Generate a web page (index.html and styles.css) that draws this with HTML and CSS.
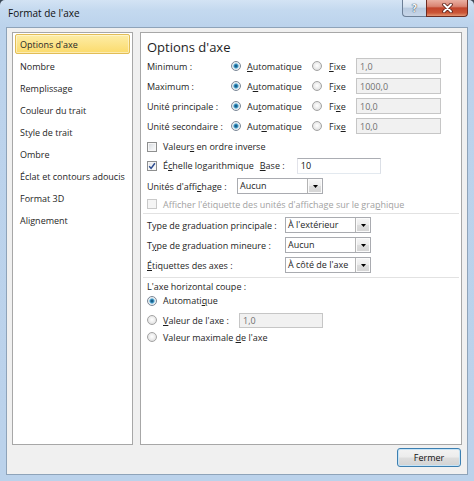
FILE: index.html
```html
<!DOCTYPE html>
<html lang="fr">
<head>
<meta charset="utf-8">
<title>Format de l'axe</title>
<link rel="stylesheet" href="styles.css">
</head>
<body>
<div class="window">
  <div class="titlebar">
    <span class="title">Format de l'axe</span>
    <div class="caption-btns">
      <span class="cbtn help">?</span>
      <span class="cbtn close"><svg width="13" height="10" viewBox="0 0 13 10"><path d="M3 1.5 L10 8.5 M10 1.5 L3 8.5" stroke="#5a2118" stroke-width="3.6" stroke-linecap="round"/><path d="M3 1.5 L10 8.5 M10 1.5 L3 8.5" stroke="#ffffff" stroke-width="1.9" stroke-linecap="round"/></svg></span>
    </div>
  </div>
  <div class="client">
    <div class="panels">
      <ul class="nav">
        <li class="nav-item selected">Options d'axe</li>
        <li class="nav-item">Nombre</li>
        <li class="nav-item">Remplissage</li>
        <li class="nav-item">Couleur du trait</li>
        <li class="nav-item">Style de trait</li>
        <li class="nav-item">Ombre</li>
        <li class="nav-item">Éclat et contours adoucis</li>
        <li class="nav-item">Format 3D</li>
        <li class="nav-item">Alignement</li>
      </ul>
      <div class="content">
        <h1 class="heading">Options d'axe</h1>
        <div class="axis-grid">
          <span class="lbl">Minimum :</span>
          <span class="radio on"></span>
          <span class="opt"><u>A</u>utomatique</span>
          <span class="radio"></span>
          <span class="opt fixe"><u>F</u>ixe</span>
          <span class="tbox disabled">1,0</span>

          <span class="lbl">Maximum :</span>
          <span class="radio on"></span>
          <span class="opt">A<u>u</u>tomatique</span>
          <span class="radio"></span>
          <span class="opt fixe">F<u>i</u>xe</span>
          <span class="tbox disabled">1000,0</span>

          <span class="lbl">Unité principale :</span>
          <span class="radio on"></span>
          <span class="opt">Au<u>t</u>omatique</span>
          <span class="radio"></span>
          <span class="opt fixe">Fi<u>x</u>e</span>
          <span class="tbox disabled">10,0</span>

          <span class="lbl">Unité secondaire :</span>
          <span class="radio on"></span>
          <span class="opt">Aut<u>o</u>matique</span>
          <span class="radio"></span>
          <span class="opt fixe">Fix<u>e</u></span>
          <span class="tbox disabled">10,0</span>
        </div>

        <div class="row chk-row first">
          <span class="check"></span>
          <span class="txt">Valeur<u>s</u> en ordre inverse</span>
        </div>
        <div class="row chk-row">
          <span class="check on"><svg width="8" height="8" viewBox="0 0 8 8"><path d="M1.2 4.2 L3.1 6.4 L6.9 1.2" fill="none" stroke="#2d4c8f" stroke-width="1.5"/></svg></span>
          <span class="txt log-txt">É<u>c</u>helle logarithmique</span>
          <span class="base-lbl"><u>B</u>ase :</span>
          <span class="tbox base">10</span>
        </div>
        <div class="row units-row">
          <span class="units-lbl">Unités d'affi<u>c</u>hage :</span>
          <span class="combo"><span class="combo-val">Aucun</span><span class="combo-btn"><svg width="5" height="3" viewBox="0 0 5 3"><polygon points="0,0 5,0 2.5,3" fill="#000"/></svg></span></span>
        </div>
        <div class="row disp-row">
          <span class="check dis"></span>
          <span class="txt dim">Afficher l'étiquette des unités d'affichage sur le gra<u>p</u>hique</span>
        </div>

        <div class="sep"></div>

        <div class="tick-grid">
          <span class="lbl">Type de graduation principale :</span>
          <span class="combo"><span class="combo-val">À l'extérieur</span><span class="combo-btn"><svg width="5" height="3" viewBox="0 0 5 3"><polygon points="0,0 5,0 2.5,3" fill="#000"/></svg></span></span>
          <span class="lbl">T<u>y</u>pe de graduation mineure :</span>
          <span class="combo"><span class="combo-val">Aucun</span><span class="combo-btn"><svg width="5" height="3" viewBox="0 0 5 3"><polygon points="0,0 5,0 2.5,3" fill="#000"/></svg></span></span>
          <span class="lbl"><u>É</u>tiquettes des axes :</span>
          <span class="combo"><span class="combo-val">À côté de l'axe</span><span class="combo-btn"><svg width="5" height="3" viewBox="0 0 5 3"><polygon points="0,0 5,0 2.5,3" fill="#000"/></svg></span></span>
        </div>

        <div class="sep second"></div>

        <div class="cross-lbl">L'axe horizontal coupe :</div>
        <div class="row radio-row auto-row">
          <span class="radio on"></span>
          <span class="txt">Automati<u>q</u>ue</span>
        </div>
        <div class="row radio-row val-row">
          <span class="radio"></span>
          <span class="txt val-lbl"><u>V</u>aleur de l'axe :</span>
          <span class="tbox disabled small">1,0</span>
        </div>
        <div class="row radio-row max-row">
          <span class="radio"></span>
          <span class="txt">Valeur maximale <u>d</u>e l'axe</span>
        </div>
      </div>
    </div>
    <div class="btn-row">
      <button class="btn default">Fermer</button>
    </div>
  </div>
</div>
</body>
</html>
```

FILE: styles.css
```css
* { box-sizing: border-box; margin: 0; padding: 0; }

html, body {
  width: 474px;
  height: 481px;
  overflow: hidden;
  background: #3b4856;
}

body {
  font-family: "Open Sans", "Noto Sans", "DejaVu Sans", sans-serif;
  font-size: 9px;
  color: #1e1e1e;
}

u { text-decoration: underline; text-underline-offset: 1px; }

.window {
  height: 481px;
  display: flex;
  flex-direction: column;
  border-radius: 5px 5px 0 0;
  background: linear-gradient(180deg, #d3e3f4 0, #c4d9ef 10px, #bcd3ec 26px, #bbd2eb 100%);
}

/* Title bar */
.titlebar {
  height: 27px;
  display: flex;
  align-items: flex-start;
  padding-left: 8px;
}

.title {
  font-size: 10px;
  line-height: 27px;
  color: #111;
}

.caption-btns {
  margin-left: auto;
  margin-right: 6px;
  display: flex;
  height: 17px;
}

.cbtn {
  height: 17px;
  display: flex;
  align-items: center;
  justify-content: center;
}

.help {
  width: 24px;
  border: 1px solid #6c7f96;
  border-top: none;
  border-right: none;
  border-radius: 0 0 0 4px;
  background: linear-gradient(180deg, #e8eff8 0, #d3e0ee 45%, #b8cadf 50%, #c7d6e8 100%);
  color: #fff;
  font-weight: bold;
  font-size: 10px;
  text-shadow: 0 0 1px #2d3a48, 0 0 1px #2d3a48;
}

.close {
  width: 42px;
  border: 1px solid #6e2b20;
  border-top: none;
  border-radius: 0 0 4px 0;
  background: linear-gradient(180deg, #eab0a2 0, #d98472 40%, #c2452c 50%, #cb5536 80%, #e29572 100%);
}

/* Client area */
.client {
  flex: 1;
  margin: 0 6px 6px 6px;
  background: #f0f0f0;
  border: 1px solid #8ea3b9;
  display: flex;
  flex-direction: column;
  padding: 4px 5px 7px 5px;
}

.panels {
  flex: 1;
  display: flex;
  gap: 7px;
}

/* Left navigation */
.nav {
  width: 121px;
  list-style: none;
  background: #fff;
  border: 1px solid #a7a7a7;
  padding: 0;
}

.nav-item {
  height: 22px;
  margin: 0 2px;
  padding-left: 4px;
  border: 1px solid transparent;
  display: flex;
  align-items: center;
  color: #262626;
  white-space: nowrap;
}

.nav-item.selected {
  height: 20px;
  margin: 1px 2px;
  border: 1px solid #e2bd55;
  border-radius: 2px;
  background: linear-gradient(180deg, #fdeda6 0, #fce48a 50%, #fbdb6c 100%);
  box-shadow: inset 0 0 0 1px rgba(255, 255, 255, 0.45);
}

/* Right content */
.content {
  width: 322px;
  background: #fff;
  border: 1px solid #a7a7a7;
  padding: 6px 6px 0 6px;
  display: flex;
  flex-direction: column;
}

.heading {
  font-size: 13px;
  font-weight: normal;
  line-height: 17px;
  height: 17px;
  color: #1e1e1e;
}

.axis-grid {
  display: grid;
  grid-template-columns: 84px 10px 71px 10px 34px 85px;
  grid-auto-rows: 20px;
  align-items: center;
}

.lbl { white-space: nowrap; }

.opt { padding-left: 6px; white-space: nowrap; }
.opt.fixe { padding-left: 7px; }

/* Radio buttons */
.radio {
  width: 10px;
  height: 10px;
  flex: none;
  border-radius: 50%;
  border: 1px solid #a3a3a3;
  background: radial-gradient(circle at 50% 45%, #ffffff 0, #eeeeee 45%, #d4d4d4 100%);
}

.radio.on {
  border-color: #7b8796;
  background: radial-gradient(circle at 50% 50%, #0d4a70 0, #1f6f9f 22%, #64b6dc 40%, #d8e6ef 52%, #f4f4f4 70%, #dcdcdc 100%);
}

/* Checkboxes */
.check {
  width: 10px;
  height: 10px;
  flex: none;
  border: 1px solid #8e8f8f;
  background: linear-gradient(135deg, #d3d6da 0, #eef0f2 60%, #fbfbfb 100%);
  box-shadow: inset 0 0 0 1px #f6f6f6;
  display: flex;
  align-items: center;
  justify-content: center;
}

.check.on { background: linear-gradient(135deg, #dfe2e6 0, #f4f5f6 60%, #fdfdfd 100%); }

.check.dis {
  border-color: #c9c9c9;
  background: #f5f5f5;
  box-shadow: none;
}

/* Text boxes */
.tbox {
  height: 16px;
  width: 85px;
  display: flex;
  align-items: center;
  padding-left: 3px;
  white-space: nowrap;
}

.tbox.disabled {
  background: #f1f1f1;
  border: 1px solid #c6c6c6;
  color: #707070;
}

.tbox.base {
  width: 84px;
  background: #fff;
  border: 1px solid #abadb3;
  border-left-color: #e2e3ea;
  border-right-color: #dbdfe6;
  border-bottom-color: #e3e9ef;
  color: #111;
}

.tbox.small { width: 84px; height: 15px; }

/* Rows */
.row {
  display: flex;
  align-items: center;
  white-space: nowrap;
}

.chk-row { height: 19px; }
.chk-row.first { margin-top: 1px; }

.chk-row .txt,
.disp-row .txt,
.radio-row .txt { margin-left: 6px; }

.log-txt { flex: none; }

.base-lbl { width: 37px; margin-left: 6px; flex: none; }

.units-row { height: 22px; }
.units-lbl { width: 90px; }

.disp-row { height: 14px; }
.dim { color: #a2a2a2; }

/* Combo boxes */
.combo {
  width: 86px;
  height: 16px;
  display: flex;
  background: #fff;
  border: 1px solid #a9abb0;
}

.combo-val {
  flex: 1;
  padding-left: 2px;
  line-height: 14px;
  white-space: nowrap;
  overflow: hidden;
}

.combo-btn {
  width: 15px;
  height: 14px;
  display: flex;
  align-items: center;
  justify-content: center;
  border-left: 1px solid #b4b4b4;
  background: linear-gradient(180deg, #f7f7f7 0, #ebebeb 50%, #dcdcdc 51%, #d4d4d4 100%);
  box-shadow: inset 0 0 0 1px #fbfbfb;
}

.sep {
  height: 1px;
  margin: 2px -4px 0 -4px;
  background: #e2e2e2;
}

.sep.second { margin-top: 2px; }

.tick-grid {
  margin-top: 1px;
  display: grid;
  grid-template-columns: 138px 86px;
  grid-auto-rows: 20px;
  align-items: center;
}

.cross-lbl {
  margin-top: 1px;
  height: 15px;
  display: flex;
  align-items: center;
}

.auto-row { height: 13px; }
.val-row { height: 20px; margin-top: 3px; }
.val-lbl { width: 76px; }
.max-row { height: 14px; }

/* Bottom buttons */
.btn-row {
  margin-top: 3px;
  height: 19px;
  display: flex;
  justify-content: flex-end;
}

.btn {
  width: 64px;
  height: 19px;
  margin-right: 1px;
  font-family: inherit;
  font-size: 9px;
  color: #111;
  border: 1px solid #3c7fb1;
  border-radius: 3px;
  background: linear-gradient(180deg, #f3f3f3 0, #ececec 48%, #dedede 52%, #d2d2d2 100%);
  box-shadow: inset 0 0 0 1px #c6e4f7;
}
```
